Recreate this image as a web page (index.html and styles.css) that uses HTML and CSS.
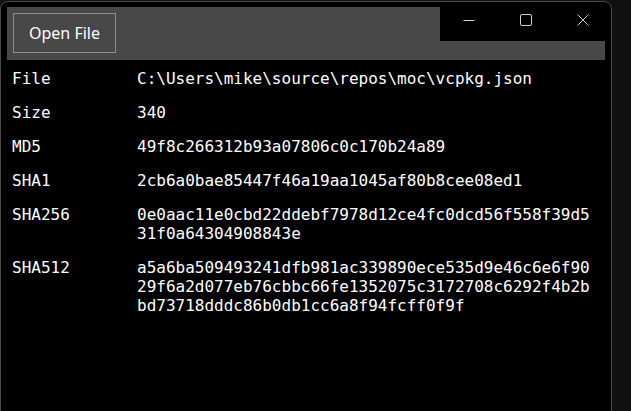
FILE: index.html
```html
<!DOCTYPE html>
<html>
<head>
<meta charset="utf-8">
<link rel="stylesheet" href="styles.css">
</head>
<body>
<div class="window">
  <div class="caption">
    <div class="cap-btn">
      <svg width="12" height="12" viewBox="0 0 12 12"><path d="M0.5 6.5H11.5" stroke="#cfcfcf" stroke-width="1" fill="none"/></svg>
    </div>
    <div class="cap-btn">
      <svg width="12" height="12" viewBox="0 0 12 12"><rect x="0.5" y="0.5" width="11" height="11" rx="1.5" stroke="#cfcfcf" stroke-width="1" fill="none"/></svg>
    </div>
    <div class="cap-btn">
      <svg width="12" height="12" viewBox="0 0 12 12"><path d="M0.5 0.5L11.5 11.5M11.5 0.5L0.5 11.5" stroke="#cfcfcf" stroke-width="1" fill="none"/></svg>
    </div>
  </div>
  <div class="toolbar">
    <button class="open-btn">Open File</button>
  </div>
  <div class="info">
    <div class="label">File</div><div class="value">C:\Users\mike\source\repos\moc\vcpkg.json</div>
    <div class="label">Size</div><div class="value">340</div>
    <div class="label">MD5</div><div class="value">49f8c266312b93a07806c0c170b24a89</div>
    <div class="label">SHA1</div><div class="value">2cb6a0bae85447f46a19aa1045af80b8cee08ed1</div>
    <div class="label">SHA256</div><div class="value">0e0aac11e0cbd22ddebf7978d12ce4fc0dcd56f558f39d531f0a64304908843e</div>
    <div class="label">SHA512</div><div class="value">a5a6ba509493241dfb981ac339890ece535d9e46c6e6f9029f6a2d077eb76cbbc66fe1352075c3172708c6292f4b2bbd73718dddc86b0db1cc6a8f94fcff0f9f</div>
  </div>
</div>
</body>
</html>
```

FILE: styles.css
```css
html, body {
  margin: 0;
  padding: 0;
  background: #111111;
  width: 631px;
  height: 411px;
  overflow: hidden;
}

.window {
  position: relative;
  box-sizing: border-box;
  margin-top: 1px;
  width: 612px;
  height: 430px;
  background: #000;
  border: 1px solid #4a4a4a;
  border-radius: 8px 8px 0 0;
  padding: 5px 6px 0 6px;
}

.caption {
  position: absolute;
  top: 0;
  left: 439px;
  height: 39px;
  display: flex;
  background: #000;
  border-top-right-radius: 8px;
}

.cap-btn {
  width: 57px;
  height: 36px;
  display: flex;
  align-items: center;
  justify-content: center;
}

.cap-btn svg {
  display: block;
}

.toolbar {
  background: #484848;
  height: 53px;
  box-sizing: border-box;
  padding: 6px;
}

.open-btn {
  box-sizing: border-box;
  width: 103px;
  height: 40px;
  background: #484848;
  border: 1px solid #8c8c8c;
  border-radius: 0;
  color: #ffffff;
  font-family: "Noto Sans", "Open Sans", sans-serif;
  font-size: 16px;
  padding: 0 0 1px 0;
  margin: 0;
}

.info {
  display: grid;
  grid-template-columns: 125px 456px;
  row-gap: 15px;
  padding: 9px 0 0 5px;
  font-family: "DejaVu Sans Mono", monospace;
  font-size: 16px;
  line-height: 19px;
  color: #ffffff;
}

.value {
  word-break: break-all;
}
```
